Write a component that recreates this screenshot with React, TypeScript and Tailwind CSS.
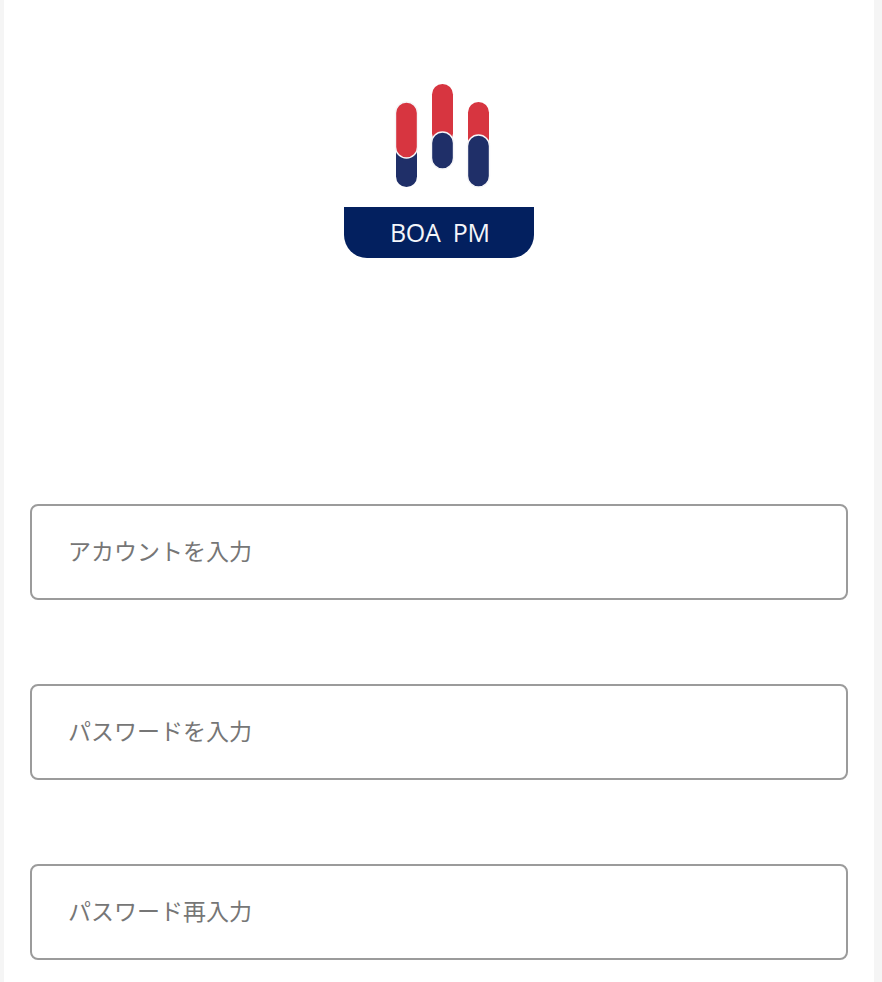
export default function App() {
  const navy = "#1f2f68";
  const red = "#d73540";
  const fields = ["アカウントを入力", "パスワードを入力", "パスワード再入力"];
  return (
    <div className="h-[982px] overflow-hidden bg-[#f5f5f5] pl-[4px] pr-[8px]">
      <div className="h-full bg-white px-[26px] pt-[80px]">
        <div className="flex justify-center">
          <svg width="190" height="180" viewBox="0 0 190 180" className="block">
            <rect x="52" y="22" width="21" height="85" rx="10.5" fill={navy} />
            <rect x="51.5" y="22" width="22" height="56" rx="11" fill={red} stroke="#f6f6f8" strokeWidth="1.4" />
            <rect x="88" y="4" width="21" height="60" rx="10.5" fill={red} />
            <rect x="87.5" y="52" width="22" height="37" rx="11" fill={navy} stroke="#f6f6f8" strokeWidth="1.4" />
            <rect x="124" y="22" width="21" height="50" rx="10.5" fill={red} />
            <rect x="123.5" y="55" width="22" height="52" rx="11" fill={navy} stroke="#f6f6f8" strokeWidth="1.4" />
            <path d="M0 127H190V155A23 23 0 0 1 167 178H23A23 23 0 0 1 0 155Z" fill="#03205f" />
            <text x="96" y="162" textAnchor="middle" fill="#f4f6fa" fontSize="25" fontFamily="'Open Sans', sans-serif" xmlSpace="preserve" textLength="100">BOA  PM</text>
          </svg>
        </div>
        <div className="mt-[244px] flex flex-col gap-[84px]">
          {fields.map((f) => (
            <input
              key={f}
              placeholder={f}
              className="h-[96px] w-[818px] rounded-[8px] border-2 border-[#9b9b9b] bg-white pb-[4px] pl-[36px] pr-[36px] text-[23px] text-[#333] outline-none placeholder:text-[#767676] [font-family:'Noto_Sans_CJK_JP',sans-serif]"
            />
          ))}
        </div>
      </div>
    </div>
  );
}
